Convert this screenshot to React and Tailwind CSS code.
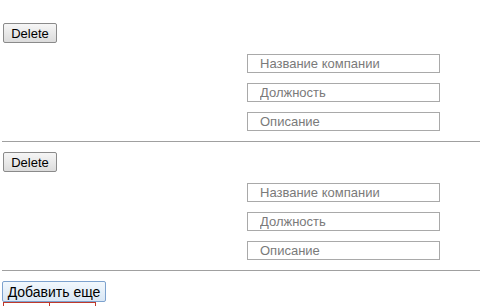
export default function App() {
  const block = (
    <div className="flex flex-col">
      <button className="w-[54px] h-[20px] ml-[3px] border border-[#8a8a8a] rounded-[2px] bg-gradient-to-b from-[#f6f6f6] to-[#dcdcdc] text-[13px] leading-none text-black">
        Delete
      </button>
      <div className="flex flex-col gap-[10px] ml-[247px] mt-[11px]">
        {["Название компании", "Должность", "Описание"].map((p) => (
          <input
            key={p}
            placeholder={p}
            className="w-[193px] h-[19px] border border-[#a9a9a9] bg-white pl-[12px] text-[13px] leading-none text-[#333] placeholder:text-[#7a7a7a] outline-none"
          />
        ))}
      </div>
      <div className="h-px bg-[#a0a0a0] ml-[2px] mt-[10px] mb-[10px]" />
    </div>
  );

  return (
    <div className="w-[480px] h-[306px] overflow-hidden bg-white pt-[23px] font-['Liberation_Sans',Arial,sans-serif]">
      {block}
      {block}
      <button className="block w-[104px] h-[21px] ml-[2px] border border-[#7da2ce] rounded-[2px] bg-gradient-to-b from-[#f2f8fd] to-[#d9e7f5] text-[14px] leading-none text-black">
        Добавить еще
      </button>
      <div className="flex ml-[3px]">
        <div className="w-[47px] h-[10px] border border-[#c0392b]" />
        <div className="w-[47px] h-[10px] border border-[#c0392b] -ml-px" />
      </div>
    </div>
  );
}
